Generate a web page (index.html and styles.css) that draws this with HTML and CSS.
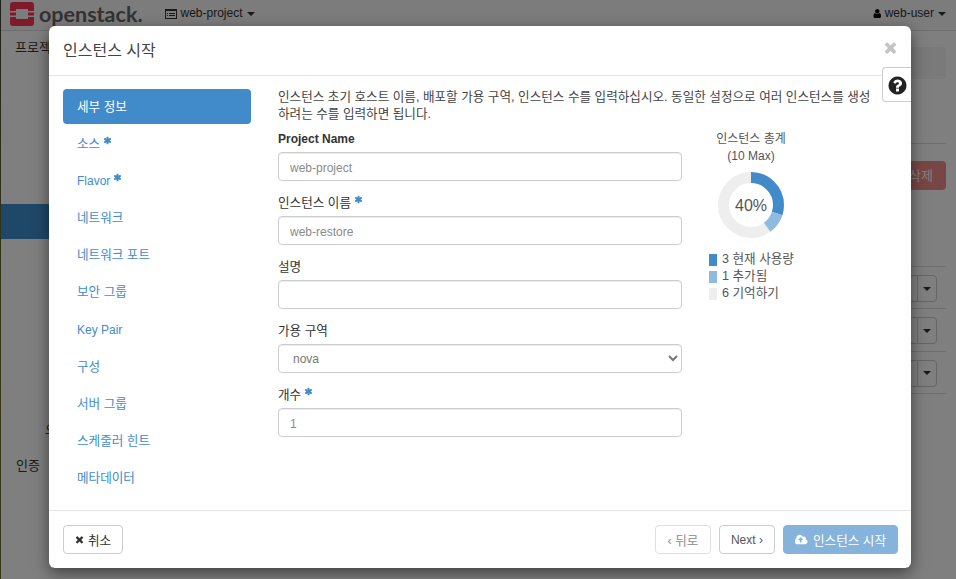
FILE: index.html
```html
<!DOCTYPE html>
<html lang="ko">
<head>
<meta charset="UTF-8">
<meta name="viewport" content="width=device-width, initial-scale=1.0">
<title>인스턴스 시작</title>
<link rel="stylesheet" href="styles.css">
</head>
<body>
    <svg class="icon-defs" aria-hidden="true">
        <symbol id="i-star" viewBox="0 0 1792 1792"><path d="M1546 1050q46 26 59.5 77.5t-12.5 97.5l-64 110q-26 46-77.5 59.5t-97.5-12.5l-266-153v307q0 52-38 90t-90 38h-128q-52 0-90-38t-38-90v-307l-266 153q-46 26-97.5 12.5t-77.5-59.5l-64-110q-26-46-12.5-97.5t59.5-77.5l266-154-266-154q-46-26-59.5-77.5t12.5-97.5l64-110q26-46 77.5-59.5t97.5 12.5l266 153v-307q0-52 38-90t90-38h128q52 0 90 38t38 90v307l266-153q46-26 97.5-12.5t77.5 59.5l64 110q26 46 12.5 97.5t-59.5 77.5l-266 154z"/></symbol>
        <symbol id="i-times" viewBox="0 0 1792 1792"><path d="M1490 1322q0 40-28 68l-136 136q-28 28-68 28t-68-28l-294-294-294 294q-28 28-68 28t-68-28l-136-136q-28-28-28-68t28-68l294-294-294-294q-28-28-28-68t28-68l136-136q28-28 68-28t68 28l294 294 294-294q28-28 68-28t68 28l136 136q28 28 28 68t-28 68l-294 294 294 294q28 28 28 68z"/></symbol>
    </svg>

    <!-- Page behind the dialog -->
    <div class="page">
        <header class="navbar">
            <svg class="logo" viewBox="0 0 24 24">
                <path class="logo-red" d="M3 0h18a3 3 0 0 1 3 3v6h-6V7H6v2H0V3a3 3 0 0 1 3-3zM0 10.500h6v3H0zM18 10.500h6v3h-6zM0 15h6v2h12v-2h6v6a3 3 0 0 1-3 3H3a3 3 0 0 1-3-3z"/>
            </svg>
            <span class="brand">openstack.</span>
            <span class="project-menu">
                <svg class="project-icon" viewBox="0 0 12 10"><rect x="0.500" y="0.500" width="11" height="9" fill="none" stroke="currentColor"/><path d="M0 0h12v2H0zM2 4h1v1H2zM4 4h6v1H4zM2 6h1v1H2zM4 6h6v1H4z" fill="currentColor"/></svg>
                web-project <i class="caret"></i>
            </span>
            <span class="user-menu">
                <svg class="user-icon" viewBox="0 0 1536 1792"><path d="M1536 1399q0 109-62.500 187t-150.500 78h-854q-88 0-150.500-78t-62.500-187q0-85 8.500-160.500t31.500-152 58.500-131 94-89 134.500-34.500q131 128 313 128t313-128q76 0 134.500 34.500t94 89 58.500 131 31.500 152 8.500 160.500zm-256-887q0 159-112.500 271.500t-271.500 112.500-271.500-112.500-112.500-271.500 112.500-271.500 271.500-112.500 271.500 112.500 112.500 271.500z"/></svg>
                web-user <i class="caret"></i>
            </span>
        </header>
        <div class="page-body">
            <aside class="sidebar">
                <div class="side-top">프로젝트</div>
                <div class="side-active"></div>
                <div class="side-sub">오브젝트 스토어</div>
                <div class="side-auth">인증</div>
            </aside>
            <main class="page-right">
                <div class="breadcrumb-box"></div>
                <div class="rule rule-head"></div>
                <div class="delete-btn">인스턴스 삭제</div>
                <div class="rule rule-table"></div>
                <div class="row-actions"><span class="act-main"></span><span class="act-caret"><i class="caret"></i></span></div>
                <div class="rule"></div>
                <div class="row-actions"><span class="act-main"></span><span class="act-caret"><i class="caret"></i></span></div>
                <div class="rule"></div>
                <div class="row-actions"><span class="act-main"></span><span class="act-caret"><i class="caret"></i></span></div>
                <div class="rule"></div>
            </main>
        </div>
    </div>
    <div class="backdrop"></div>

    <!-- Launch instance dialog -->
    <div class="modal">
        <div class="modal-header">
            <h4 class="modal-title">인스턴스 시작</h4>
            <svg class="close-icon" viewBox="0 0 1792 1792"><use href="#i-times"/></svg>
        </div>
        <a class="help-btn">
            <svg viewBox="0 0 1792 1792"><path d="M1024 1376v-192q0-14-9-23t-23-9h-192q-14 0-23 9t-9 23v192q0 14 9 23t23 9h192q14 0 23-9t9-23zm256-672q0-88-55.500-163t-138.500-116-170-41q-243 0-371 213-15 24 8 42l132 100q7 6 19 6 16 0 25-12 53-68 86-92 34-24 86-24 48 0 85.500 26t37.500 59q0 38-20 61t-68 45q-63 28-115.500 86.500t-52.500 125.500v36q0 14 9 23t23 9h192q14 0 23-9t9-23q0-19 21.500-49.500t54.500-49.500q32-18 49-28.500t46-35 44.500-48 28-60.500 12.500-81zm384 192q0 209-103 385.500t-279.500 279.500-385.500 103-385.500-103-279.500-279.500-103-385.500 103-385.500 279.500-279.500 385.500-103 385.500 103 279.500 279.500 103 385.500z"/></svg>
        </a>

        <div class="modal-body">
            <ul class="steps">
                <li class="step active">세부 정보</li>
                <li class="step">소스 <svg class="req"><use href="#i-star"/></svg></li>
                <li class="step latin">Flavor <svg class="req"><use href="#i-star"/></svg></li>
                <li class="step">네트워크</li>
                <li class="step">네트워크 포트</li>
                <li class="step">보안 그룹</li>
                <li class="step latin">Key Pair</li>
                <li class="step">구성</li>
                <li class="step">서버 그룹</li>
                <li class="step">스케줄러 힌트</li>
                <li class="step">메타데이터</li>
            </ul>

            <div class="step-content">
                <p class="help-text">인스턴스 초기 호스트 이름, 배포할 가용 구역, 인스턴스 수를 입력하십시오. 동일한 설정으로 여러 인스턴스를 생성하려는 수를 입력하면 됩니다.</p>
                <div class="form-row">
                    <form class="fields">
                        <div class="form-group">
                            <label class="label-bold">Project Name</label>
                            <input class="form-control muted" value="web-project">
                        </div>
                        <div class="form-group">
                            <label>인스턴스 이름 <svg class="req"><use href="#i-star"/></svg></label>
                            <input class="form-control muted" value="web-restore">
                        </div>
                        <div class="form-group">
                            <label>설명</label>
                            <input class="form-control">
                        </div>
                        <div class="form-group">
                            <label>가용 구역</label>
                            <select class="form-control select-control"><option>nova</option></select>
                        </div>
                        <div class="form-group">
                            <label>개수 <svg class="req"><use href="#i-star"/></svg></label>
                            <input class="form-control muted" value="1">
                        </div>
                    </form>

                    <div class="summary">
                        <div class="summary-title">인스턴스 총계</div>
                        <div class="summary-title">(10 Max)</div>
                        <div class="donut">
                            <svg viewBox="0 0 66 66">
                                <circle class="ring-free" cx="33" cy="33" r="27.500" pathLength="100"/>
                                <circle class="ring-used" cx="33" cy="33" r="27.500" pathLength="100" stroke-dasharray="30 70"/>
                                <circle class="ring-added" cx="33" cy="33" r="27.500" pathLength="100" stroke-dasharray="10 90" stroke-dashoffset="-30"/>
                            </svg>
                            <span class="donut-label">40%</span>
                        </div>
                        <ul class="legend">
                            <li><i class="swatch used"></i>3 현재 사용량</li>
                            <li><i class="swatch added"></i>1 추가됨</li>
                            <li><i class="swatch free"></i>6 기억하기</li>
                        </ul>
                    </div>
                </div>
            </div>
        </div>

        <div class="modal-footer">
            <button class="btn btn-cancel"><svg class="btn-times"><use href="#i-times"/></svg>취소</button>
            <div class="footer-right">
                <button class="btn btn-faded">‹ 뒤로</button>
                <button class="btn btn-next">Next ›</button>
                <button class="btn btn-primary">
                    <svg class="cloud-icon" viewBox="0 0 1920 1792"><path d="M1216 864q0-14-9-23l-352-352q-9-9-23-9t-23 9l-351 351q-10 12-10 24 0 14 9 23t23 9h224v352q0 13 9.500 22.500t22.500 9.500h192q13 0 22.500-9.500t9.500-22.500v-352h224q13 0 22.500-9.500t9.500-22.500zm640 288q0 159-112.500 271.500t-271.500 112.500h-1088q-185 0-316.500-131.500t-131.500-316.500q0-130 70-240t188-165q-2-30-2-43 0-212 150-362t362-150q156 0 285.500 87t188.500 231q71-62 166-62 106 0 181 75t75 181q0 76-41 138 130 31 213.500 135.500t83.500 238.500z"/></svg>
                    인스턴스 시작
                </button>
            </div>
        </div>
    </div>
</body>
</html>
```

FILE: styles.css
```css
/* General Reset */
* {
    margin: 0;
    padding: 0;
    box-sizing: border-box;
}

body {
    height: 100vh;
    overflow: hidden;
    font-family: "Liberation Sans", "Noto Sans CJK KR", Arial, sans-serif;
    font-size: 12px;
    line-height: 17px;
    color: #333;
    padding-left: 1px;
    background: linear-gradient(180deg, #3c4038 0%, #5d6233 30%, #6f7226 70%, #6a6c3c 90%, #6d7030 100%);
}

ul {
    list-style: none;
}

.icon-defs {
    display: none;
}

.caret {
    display: inline-block;
    width: 0;
    height: 0;
    border-top: 4px solid currentColor;
    border-left: 4px solid transparent;
    border-right: 4px solid transparent;
    vertical-align: middle;
}

/* Page behind the dialog */
.page {
    height: 100%;
    background-color: #fff;
    display: flex;
    flex-direction: column;
}

.navbar {
    height: 31px;
    flex: none;
    display: flex;
    align-items: center;
    padding: 0 10px 3px 9px;
    background-color: #f8f8f8;
    border-bottom: 1px solid #ddd;
}

.logo {
    width: 24px;
    height: 24px;
    flex: none;
    margin-top: 1px;
}

.logo-red {
    fill: #ff3458;
}

.brand {
    margin-left: 5px;
    font-family: Lato, "Open Sans", sans-serif;
    font-size: 21.500px;
    font-weight: bold;
    line-height: 24px;
    color: #666;
}

.project-menu {
    margin-left: 22px;
    display: flex;
    align-items: center;
    gap: 4px;
}

.project-icon {
    width: 12px;
    height: 10px;
}

.user-menu {
    margin-left: auto;
    display: flex;
    align-items: center;
    gap: 4px;
}

.user-icon {
    width: 9px;
    height: 11px;
}

.page-body {
    flex: 1;
    display: flex;
    justify-content: space-between;
}

/* Only the strip left of the dialog is ever visible */
.sidebar {
    width: 48px;
    overflow: hidden;
    white-space: nowrap;
    padding-top: 8px;
    font-size: 13px;
}

.side-top {
    padding-left: 14px;
}

.side-active {
    height: 35px;
    margin-top: 148px;
    background-color: #3f8fd0;
}

.side-sub {
    margin-top: 182px;
    padding-left: 44px;
}

.side-auth {
    margin-top: 19px;
    padding-left: 15px;
}

.page-right {
    width: 200px;
    margin-right: 10px;
    padding-top: 16px;
}

.breadcrumb-box {
    height: 32px;
    background-color: #f5f5f5;
    border-radius: 4px;
}

.rule {
    height: 1px;
    background-color: #ddd;
}

.rule-head {
    margin-top: 64px;
}

.delete-btn {
    height: 29px;
    margin-top: 17px;
    padding-right: 13px;
    line-height: 29px;
    font-size: 13px;
    text-align: right;
    color: #fff;
    background-color: #f08c8c;
    border-radius: 4px;
}

.rule-table {
    margin-top: 76px;
}

.row-actions {
    height: 27px;
    margin: 8px 9px 6.400px 0;
    display: flex;
    justify-content: flex-end;
}

.act-main {
    width: 60px;
    border: 1px solid #ccc;
    border-right: 0;
    border-radius: 4px 0 0 4px;
}

.act-caret {
    width: 20px;
    display: flex;
    align-items: center;
    justify-content: center;
    border: 1px solid #ccc;
    border-radius: 0 4px 4px 0;
}

.backdrop {
    position: absolute;
    inset: 0;
    background-color: rgba(0, 0, 0, 0.5);
}

/* Dialog */
.modal {
    position: absolute;
    top: 26px;
    left: 49px;
    width: 862px;
    height: 542px;
    display: flex;
    flex-direction: column;
    background-color: #fff;
    border-radius: 6px;
    box-shadow: 0 5px 15px rgba(0, 0, 0, 0.5);
}

.modal-header {
    height: 50px;
    flex: none;
    display: flex;
    align-items: center;
    justify-content: space-between;
    padding: 0 14px;
    border-bottom: 1px solid #e5e5e5;
}

.modal-title {
    font-size: 16px;
    font-weight: normal;
    line-height: 20px;
    color: #444;
}

.close-icon {
    width: 17px;
    height: 17px;
    margin: -6px -2px 0 0;
    fill: #c4c4c4;
}

.help-btn {
    position: absolute;
    top: 41px;
    right: 0;
    width: 29px;
    height: 35px;
    display: flex;
    align-items: center;
    justify-content: center;
    background-color: #fff;
    border: 1px solid #ccc;
    border-right: 0;
    border-radius: 4px 0 0 4px;
}

.help-btn svg {
    width: 21px;
    height: 21px;
    margin-top: 2px;
    fill: #222;
}

.modal-body {
    flex: 1;
    display: flex;
    padding: 13px 13px 0 14px;
}

.steps {
    width: 188px;
    flex: none;
    display: flex;
    flex-direction: column;
    gap: 2px;
}

.step {
    height: 35.100px;
    padding-left: 14px;
    line-height: 37px;
    font-size: 12.600px;
    color: #428bca;
    border-radius: 4px;
}

.step.latin {
    font-size: 12px;
}

.step.active {
    color: #fff;
    background-color: #428bca;
}

.req {
    width: 9px;
    height: 9px;
    margin-left: -1px;
    fill: #428bca;
    vertical-align: 3px;
}

.step-content {
    flex: 1;
    margin-left: 27px;
}

.help-text {
    max-width: 600px;
    font-size: 12.600px;
    color: #444;
    margin-bottom: 7px;
}

.form-row {
    display: flex;
}

.fields {
    width: 404px;
    flex: none;
}

.form-group {
    margin-bottom: 13px;
}

label {
    display: block;
    padding-top: 1px;
    margin-bottom: 4px;
    font-size: 12.600px;
}

.label-bold {
    font-size: 12px;
    font-weight: bold;
}

.form-control {
    display: block;
    width: 100%;
    height: 29px;
    padding: 2px 11px 0;
    font-family: inherit;
    font-size: 12px;
    color: #555;
    background-color: #fff;
    border: 1px solid #ccc;
    border-radius: 4px;
    box-shadow: inset 0 1px 1px rgba(0, 0, 0, 0.075);
}

.form-control.muted {
    color: #8a8a8a;
}

.select-control {
    padding: 0 10px;
    color: #777;
}

/* Quota chart */
.summary {
    width: 112px;
    margin-left: 13px;
    padding-top: 1px;
    text-align: center;
    color: #555;
}

.donut {
    position: relative;
    width: 66px;
    height: 66px;
    margin: 7px auto 13px;
}

.donut svg {
    display: block;
    transform: rotate(-90deg);
}

.donut circle {
    fill: none;
    stroke-width: 11;
}

.ring-free {
    stroke: #eee;
}

.ring-used {
    stroke: #428bca;
}

.ring-added {
    stroke: #90bbe1;
}

.donut-label {
    position: absolute;
    inset: 0;
    display: flex;
    align-items: center;
    justify-content: center;
    font-size: 16px;
}

.legend {
    margin-left: 14px;
    text-align: left;
    font-size: 12.600px;
}

.legend li {
    display: flex;
    align-items: center;
    gap: 5px;
}

.swatch {
    width: 8px;
    height: 12px;
    flex: none;
}

.swatch.used {
    background-color: #428bca;
}

.swatch.added {
    background-color: #90bbe1;
}

.swatch.free {
    background-color: #eee;
}

/* Footer */
.modal-footer {
    flex: none;
    display: flex;
    justify-content: space-between;
    padding: 14px 13px 14px 14px;
    border-top: 1px solid #e5e5e5;
}

.footer-right {
    display: flex;
    gap: 8px;
}

.btn {
    height: 29px;
    padding: 0 11.500px;
    display: inline-flex;
    align-items: center;
    gap: 5px;
    font-family: inherit;
    font-size: 12.600px;
    color: #333;
    background-color: #fff;
    border: 1px solid #ccc;
    border-radius: 4px;
}

.btn-cancel {
    padding: 0 11px 0 10px;
    gap: 3px;
}

.btn-faded {
    color: #8c8c8c;
    border-color: #e0e0e0;
}

.btn-next {
    padding: 0 11px;
    font-size: 12px;
    color: #555;
}

.btn-primary {
    padding: 0 11px;
    color: #fff;
    background-color: #85b3dc;
    border-color: #85b3dc;
}

.btn-times {
    width: 11px;
    height: 11px;
    fill: #333;
}

.cloud-icon {
    width: 13px;
    height: 12px;
    fill: #fff;
}
```
